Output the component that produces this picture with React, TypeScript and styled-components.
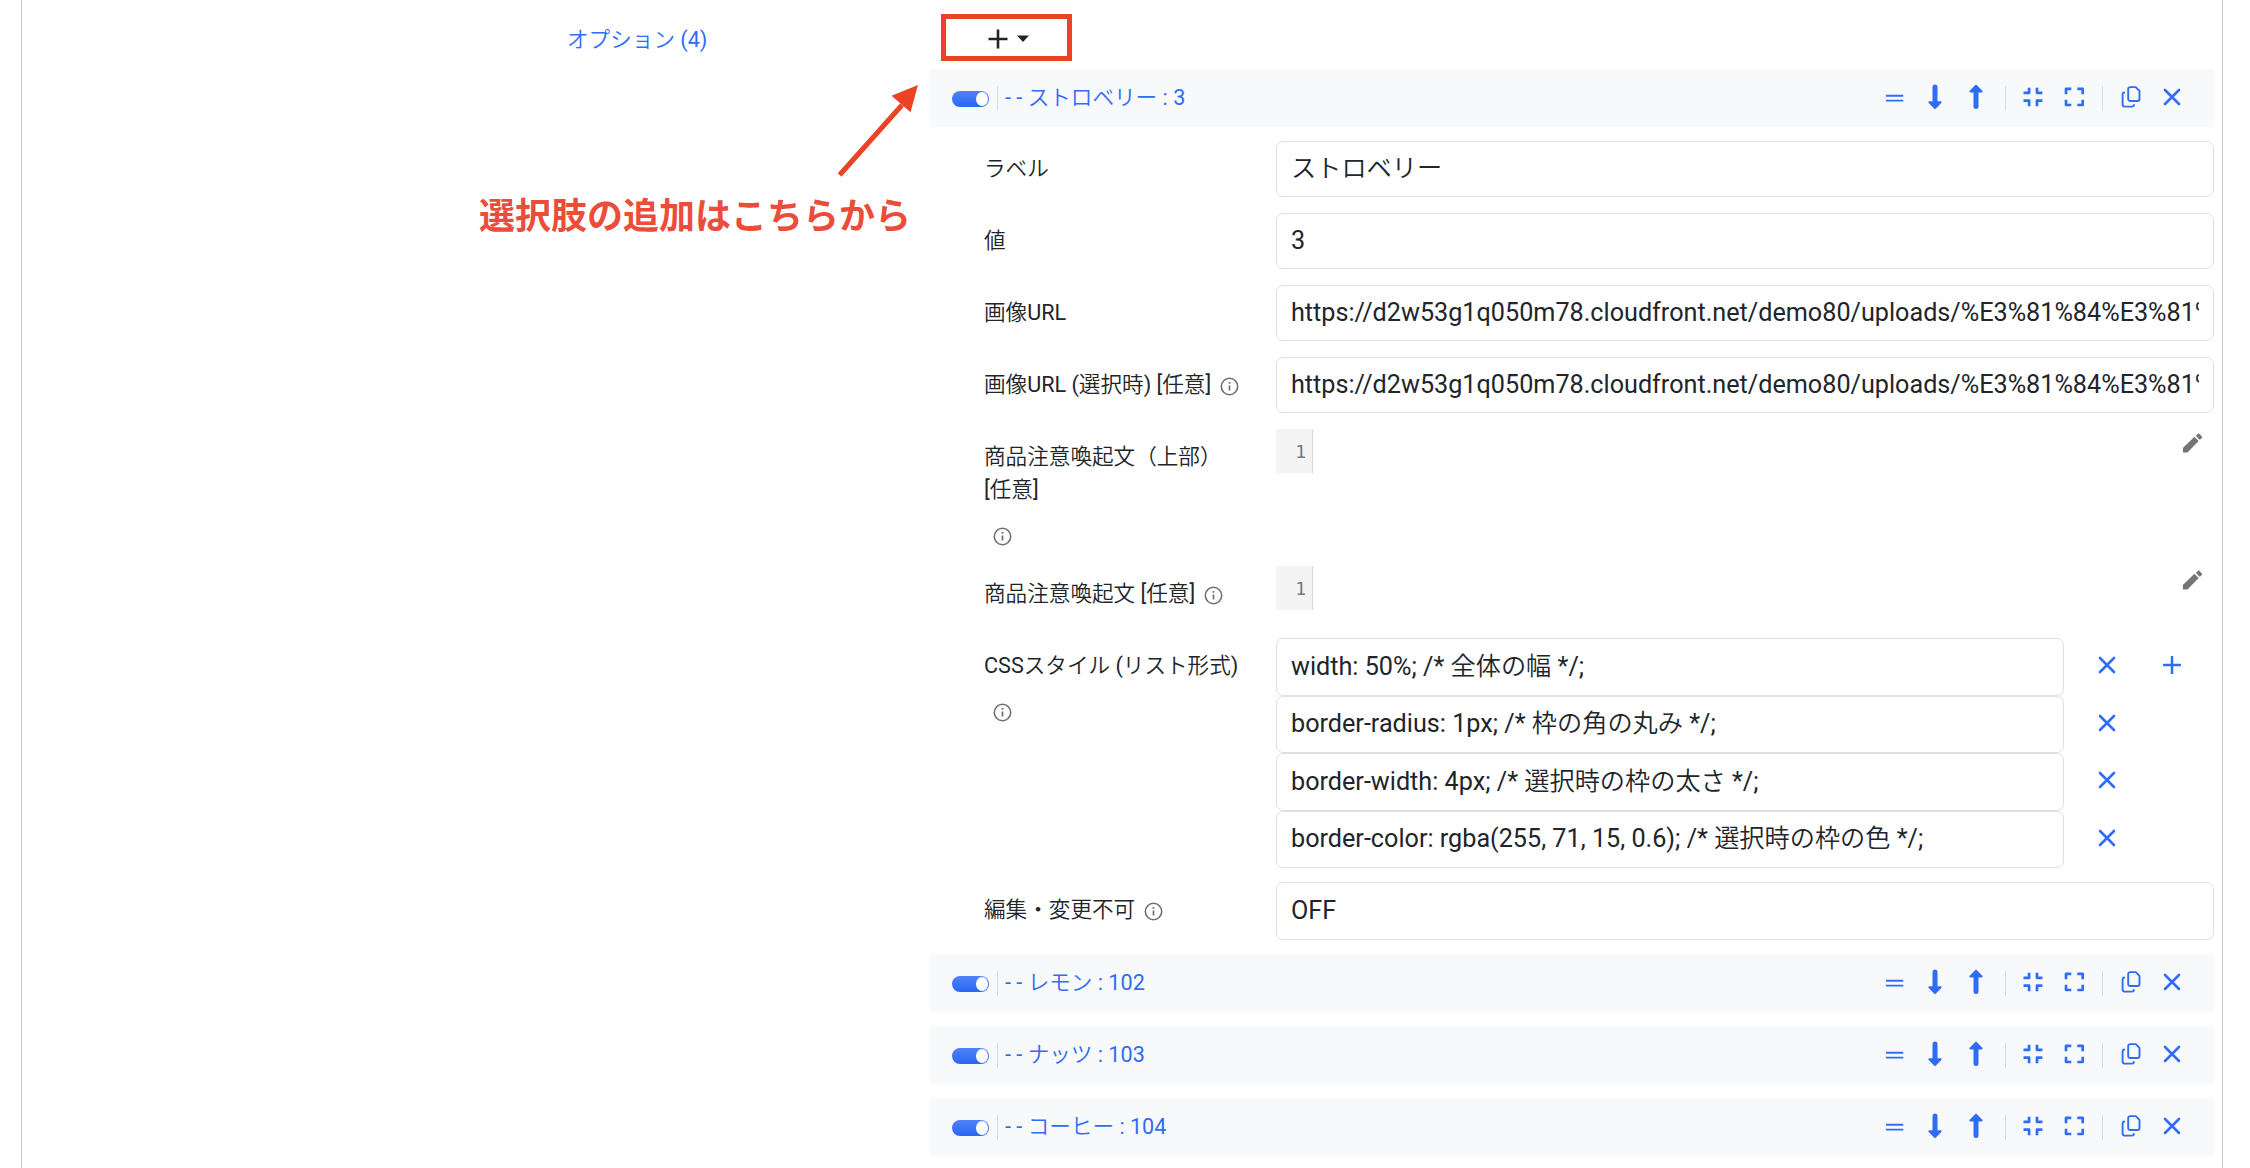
import React from 'react';
import styled, { createGlobalStyle } from 'styled-components';

const BLUE = '#2f6df6';
const INK = '#212529';
const RED = '#ec4327';

const GlobalStyle = createGlobalStyle`
  *, *::before, *::after { box-sizing: border-box; }
  body {
    margin: 0;
    background: #fff;
    color: ${INK};
    font-family: Roboto, 'Noto Sans CJK JP DemiLight', 'Noto Sans CJK JP Light', 'Noto Sans CJK JP', sans-serif;
    font-size: 21.6px;
  }
`;

const Page = styled.div`
  position: relative;
  height: 1168px;
  padding: 0 27px 0 21px;
  overflow: hidden;
`;

const Panel = styled.main`
  display: grid;
  grid-template-columns: 908px 1fr;
  height: 100%;
  padding-right: 8px;
  border-left: 1px solid #c9cacc;
  border-right: 1px solid #c9cacc;
`;

const GroupLabel = styled.div`
  padding: 23px 0 0 545px;
  color: ${BLUE};
  line-height: 33px;
`;

const Content = styled.div`
  display: flex;
  flex-direction: column;
  min-width: 0;
  padding-top: 14px;
`;

const AddButton = styled.button`
  display: flex;
  align-items: center;
  width: 131px;
  height: 47px;
  margin: 0 0 8px 11px;
  padding: 2px 0 0 42px;
  gap: 9px;
  border: 5px solid ${RED};
  background: #fff;
`;

const OptionList = styled.div`
  display: flex;
  flex-direction: column;
  gap: 14px;
`;

const OptionHead = styled.div`
  display: flex;
  align-items: center;
  height: 58px;
  padding: 0 21px 0 22px;
  background: #f8f9fb;
  color: ${BLUE};
`;

const Toggle = styled.span`
  display: flex;
  justify-content: flex-end;
  align-items: center;
  width: 37px;
  height: 16px;
  margin-top: 2px;
  padding-right: 1px;
  border-radius: 8px;
  background: linear-gradient(#4f83f7, #2a66f4);

  &::after {
    content: '';
    width: 12px;
    height: 14px;
    border-radius: 50%;
    background: #fff;
  }
`;

const Divider = styled.span<{ $gap: number }>`
  width: 1px;
  height: 25px;
  margin: 0 ${(p) => p.$gap}px;
  background: #d9dbdf;
`;

const OptionTitle = styled.span`
  flex: 1;
  margin: -2px 0 0 -1px;
  line-height: 33px;
  white-space: pre;
`;

const Tools = styled.div`
  display: flex;
  align-items: center;
`;

const IconButton = styled.span<{ $width: number }>`
  display: flex;
  justify-content: center;
  width: ${(p) => p.$width}px;
  color: ${BLUE};
`;

const Fields = styled.div`
  display: flex;
  flex-direction: column;
  gap: 14px;
  padding-left: 54px;
`;

const FieldRow = styled.div`
  display: grid;
  grid-template-columns: 292px 1fr;
  align-items: start;
  min-height: 58px;
`;

const FieldLabel = styled.div`
  display: flex;
  flex-wrap: wrap;
  align-items: center;
  width: 264px;
`;

const LabelText = styled.span`
  padding: 11px 0 13px;
  line-height: 33px;
`;

const InfoMark = styled.span`
  display: flex;
  align-items: center;
  height: 33px;
  padding: 1px 0 0 9px;
  color: #6f7072;
`;

const TextInput = styled.input<{ $height: number; $lift?: number }>`
  display: block;
  width: 100%;
  height: ${(p) => p.$height}px;
  padding: 0 14px ${(p) => p.$lift ?? 1}px;
  border: 1px solid #dee0e4;
  border-radius: 7px;
  outline: 0;
  background: #fff;
  color: ${INK};
  font: inherit;
  font-size: 25.2px;
`;

const Editor = styled.div`
  display: flex;
  justify-content: space-between;
`;

const Gutter = styled.span`
  width: 37px;
  height: 44px;
  padding-right: 6px;
  border-right: 1px solid #d8d8d8;
  background: #f4f4f4;
  color: #777;
  font-family: 'DejaVu Sans Mono', monospace;
  font-size: 18px;
  line-height: 45px;
  text-align: right;
`;

const PencilButton = styled.span`
  padding: 4px 11px 0 0;
  color: #757575;
`;

const StyleRow = styled.div`
  display: grid;
  grid-template-columns: 788px 65px 65px;
  align-items: center;
  height: 57.5px;

  & > span { margin: -1px 0 0 10px; }
`;

const Callout = styled.p`
  position: absolute;
  left: 479px;
  top: 188px;
  margin: 0;
  color: #ec4d3b;
  font-size: 36px;
  font-weight: 700;
  font-family: 'Noto Sans CJK JP', sans-serif;
  line-height: 50px;
  white-space: nowrap;
`;

const CalloutArrow = styled.svg`
  position: absolute;
  left: 830px;
  top: 80px;
`;

const ICONS: Record<string, React.ReactNode> = {
  equals: <path d="M-9 -2.3H8.3M-9 2.6H8.3" strokeWidth="1.9" />,
  down: (
    <g fill="currentColor" strokeLinejoin="round" transform="translate(-1 0)">
      <path d="M0 -10.9V4" strokeWidth="5" strokeLinecap="round" />
      <path d="M-5.6 4.2H5.6L0 10Z" strokeWidth="2" />
    </g>
  ),
  up: (
    <g fill="currentColor" strokeLinejoin="round" transform="translate(-1 0)">
      <path d="M0 8.5V-6" strokeWidth="5" strokeLinecap="round" />
      <path d="M-5.6 -6.6H5.6L0 -12.3Z" strokeWidth="2" />
    </g>
  ),
  collapse: (
    <path
      d="M-3.9 -10.3V-5.2H-9.5M4 -10.3V-5.2H9.4M-9.5 2.7H-3.9V8.2M9.4 2.7H4V8.2"
      strokeWidth="2.7"
      strokeLinejoin="round"
    />
  ),
  expand: (
    <path
      d="M-9 -3.8V-9.1H-3.7M2.3 -9.1H7.7V-3.8M7.7 1.8V7H2.3M-3.7 7H-9V1.8"
      strokeWidth="2.7"
      strokeLinejoin="round"
    />
  ),
  copy: (
    <g strokeWidth="1.9" strokeLinecap="round" strokeLinejoin="round">
      <path d="M-0.8 -10.9H4.8L8.5 -7V1A2 2 0 0 1 6.5 3H-0.8A2 2 0 0 1 -2.8 1V-8.9A2 2 0 0 1 -0.8 -10.9Z" />
      <path d="M-6.8 -5.5Q-8.4 -5.3 -8.4 -3.6V6.6A2 2 0 0 0 -6.4 8.6H1Q2.8 8.6 2.9 7" />
    </g>
  ),
  close: <path d="M-7 -8L7 6M7 -8L-7 6" strokeWidth="2.6" strokeLinecap="round" />,
  plus: <path d="M0 -10.1V8M-9 -1H9" strokeWidth="2.5" />,
};

const Icon = ({ name }: { name: string }) => (
  <svg width="28" height="28" viewBox="-14 -14 28 28" fill="none" stroke="currentColor">
    {ICONS[name]}
  </svg>
);

const Info = () => (
  <InfoMark>
    <svg width="19" height="19" viewBox="0 0 19 19" fill="none" stroke="currentColor">
      <circle cx="9.5" cy="9.5" r="8.2" strokeWidth="1.6" />
      <path d="M9.5 8.4V13.6M9.5 5V6.7" strokeWidth="1.7" />
    </svg>
  </InfoMark>
);

const Pencil = () => (
  <PencilButton>
    <svg width="21" height="21" viewBox="0 0 21 21" fill="currentColor" stroke="currentColor">
      <path d="M1.6 15.3L12.4 4.8L15.7 8.1L5 18.9H1.6Z" strokeWidth="1.4" strokeLinejoin="round" />
      <path d="M15.2 2.9L16.6 1.5L19.2 4.1L17.8 5.5Z" strokeWidth="2" strokeLinejoin="round" />
    </svg>
  </PencilButton>
);

const Header = ({ title }: { title: string }) => (
  <OptionHead>
    <Toggle />
    <Divider $gap={8} />
    <OptionTitle>{title}</OptionTitle>
    <Tools>
      {['equals', 'down', 'up'].map((n) => (
        <IconButton key={n} $width={41.3}><Icon name={n} /></IconButton>
      ))}
      <Divider $gap={7} />
      {['collapse', 'expand'].map((n) => (
        <IconButton key={n} $width={41.3}><Icon name={n} /></IconButton>
      ))}
      <Divider $gap={7} />
      {['copy', 'close'].map((n) => (
        <IconButton key={n} $width={41.3}><Icon name={n} /></IconButton>
      ))}
    </Tools>
  </OptionHead>
);

interface FieldProps {
  label: string;
  info?: boolean;
  children: React.ReactNode;
}

const Field = ({ label, info, children }: FieldProps) => (
  <FieldRow>
    <FieldLabel>
      <LabelText>{label}</LabelText>
      {info && <Info />}
    </FieldLabel>
    <div>{children}</div>
  </FieldRow>
);

const CodeEditor = () => (
  <Editor>
    <Gutter>1</Gutter>
    <Pencil />
  </Editor>
);

const IMAGE_URL =
  'https://d2w53g1q050m78.cloudfront.net/demo80/uploads/%E3%81%84%E3%81%A1%E3%81%94.png';

const STYLES = [
  'width: 50%; /* 全体の幅 */;',
  'border-radius: 1px; /* 枠の角の丸み */;',
  'border-width: 4px; /* 選択時の枠の太さ */;',
  'border-color: rgba(255, 71, 15, 0.6); /* 選択時の枠の色 */;',
];

export default function App() {
  return (
    <Page lang="ja">
      <GlobalStyle />
      <Panel>
        <GroupLabel>オプション (4)</GroupLabel>
        <Content>
          <AddButton>
            <svg width="20" height="20" viewBox="0 0 20 20" stroke={INK} strokeWidth="2.6">
              <path d="M10 0.5V19.5M0.5 10H19.5" />
            </svg>
            <svg width="12" height="8" viewBox="0 0 12 8" fill={INK}>
              <path d="M0 0.4H12L6 7Z" />
            </svg>
          </AddButton>
          <OptionList>
            <Header title="- - ストロベリー : 3" />
            <Fields>
              <Field label="ラベル">
                <TextInput $height={56} $lift={6} readOnly value="ストロベリー" />
              </Field>
              <Field label="値">
                <TextInput $height={56} readOnly value="3" />
              </Field>
              <Field label="画像URL">
                <TextInput $height={56} readOnly value={IMAGE_URL} />
              </Field>
              <Field label="画像URL (選択時) [任意]" info>
                <TextInput $height={56} readOnly value={IMAGE_URL} />
              </Field>
              <Field label="商品注意喚起文（上部） [任意]" info>
                <CodeEditor />
              </Field>
              <Field label="商品注意喚起文 [任意]" info>
                <CodeEditor />
              </Field>
              <Field label="CSSスタイル (リスト形式)" info>
                {STYLES.map((value, i) => (
                  <StyleRow key={value}>
                    <TextInput $height={57.5} $lift={6} readOnly value={value} />
                    <IconButton $width={65}><Icon name="close" /></IconButton>
                    {i === 0 && <IconButton $width={65}><Icon name="plus" /></IconButton>}
                  </StyleRow>
                ))}
              </Field>
              <Field label="編集・変更不可" info>
                <TextInput $height={58} readOnly value="OFF" />
              </Field>
            </Fields>
            <Header title="- - レモン : 102" />
            <Header title="- - ナッツ : 103" />
            <Header title="- - コーヒー : 104" />
          </OptionList>
        </Content>
      </Panel>
      <Callout>選択肢の追加はこちらから</Callout>
      <CalloutArrow width="100" height="100" viewBox="0 0 100 100" fill={RED}>
        <path d="M9.6 95L72 25" stroke={RED} strokeWidth="5" />
        <path d="M88 5L61.5 15.8L80.5 32.2Z" />
      </CalloutArrow>
    </Page>
  );
}
